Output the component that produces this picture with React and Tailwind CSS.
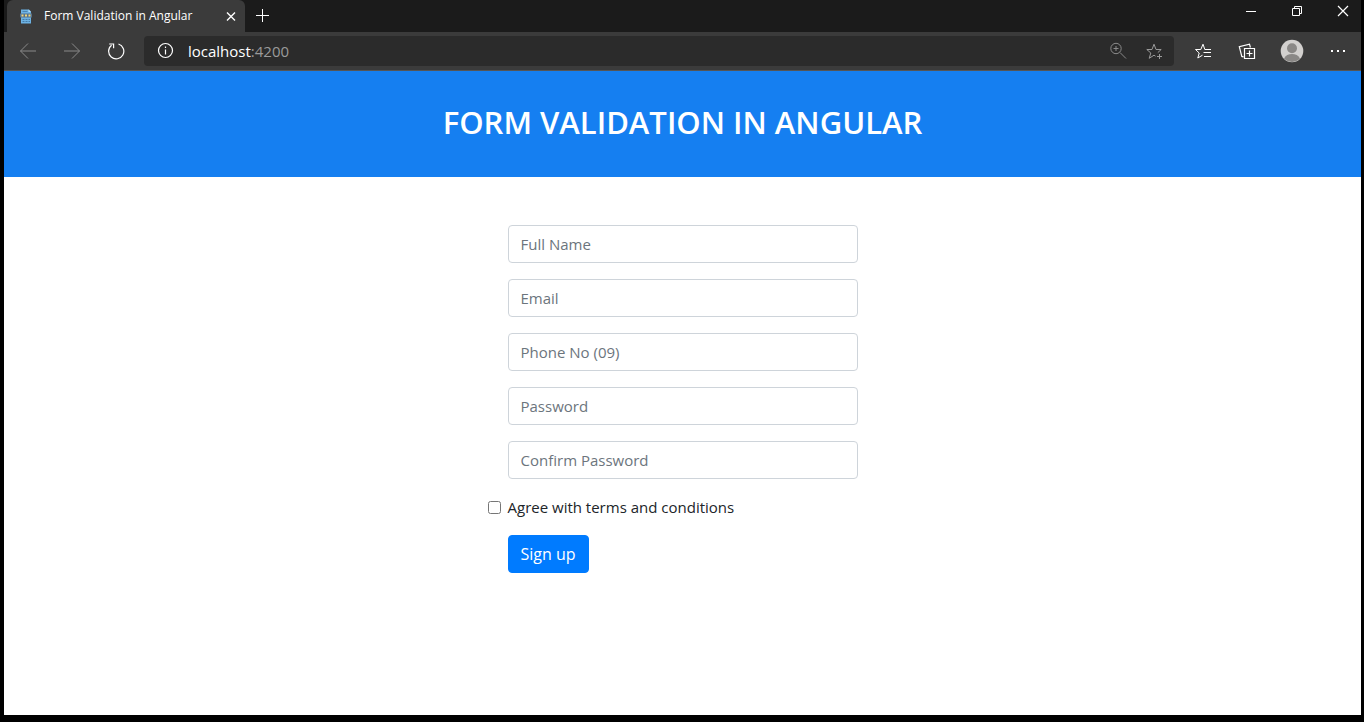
import { useState } from "react";

const fields = [
  { id: "fullName", label: "Full Name", type: "text" },
  { id: "email", label: "Email", type: "email" },
  { id: "phone", label: "Phone No (09)", type: "tel" },
  { id: "password", label: "Password", type: "password" },
  { id: "confirmPassword", label: "Confirm Password", type: "password" },
];

function Icon({ size = 18, className = "", children }) {
  return (
    <svg
      width={size}
      height={size}
      viewBox={`0 0 ${size} ${size}`}
      fill="none"
      stroke="currentColor"
      className={`shrink-0 ${className}`}
      aria-hidden="true"
    >
      {children}
    </svg>
  );
}

function ToolButton({ label, className = "", children }) {
  return (
    <button type="button" aria-label={label} className={`flex shrink-0 items-center justify-center ${className}`}>
      {children}
    </button>
  );
}

function TabStrip() {
  return (
    <div className="flex h-8 items-stretch bg-[#1b1b1b] pl-[3px] text-white">
      <div className="flex w-[238px] items-center rounded-t-md bg-[#3b3b3b] pr-[6px] pl-[13px]">
        <svg width="12" height="15" viewBox="0 0 12 15" className="shrink-0" aria-hidden="true">
          <path d="M1 0.5H9L11 2.5V14.5H1Z" fill="#6cb2e4" />
          <path d="M8.5 0.5L11 3H8.5Z" fill="#b9def5" />
          <path d="M2.5 2.5H7.5" stroke="#4b86b3" />
          <path d="M0 4.5H12V8.5H0Z" fill="#56738c" />
          <path d="M1.5 6.5H3.5M5 6.5H7M8.5 6.5H10.5" stroke="#f2d77c" strokeWidth="2" />
          <path d="M2.5 10.5H10M2.5 12.5H10" stroke="#467ba5" strokeDasharray="2 1" />
        </svg>
        <span className="ml-3 flex-1 text-xs whitespace-nowrap">Form Validation in Angular</span>
        <ToolButton label="Close tab" className="size-4">
          <Icon size={16}>
            <path d="M4 4.5L12 12.5M12 4.5L4 12.5" strokeWidth="1.4" />
          </Icon>
        </ToolButton>
      </div>
      <ToolButton label="New tab" className="w-[34px]">
        <Icon size={16}>
          <path d="M8.5 1V14M2 7.5H15" />
        </Icon>
      </ToolButton>
      <div className="ml-auto flex h-[22px] items-center">
        <ToolButton label="Minimize" className="w-[46px]">
          <Icon size={12}>
            <path d="M1 6.5H11" />
          </Icon>
        </ToolButton>
        <ToolButton label="Restore" className="w-[46px]">
          <Icon size={12}>
            <path d="M1.5 3.5H8.5V10.5H1.5ZM3.5 3.5V1.5H10.5V8.5H8.5" />
          </Icon>
        </ToolButton>
        <ToolButton label="Close window" className="w-[41px] pl-[5px]">
          <Icon size={12}>
            <path d="M1 1L11 11M11 1L1 11" strokeWidth="1.2" />
          </Icon>
        </ToolButton>
      </div>
    </div>
  );
}

function Toolbar() {
  return (
    <div className="flex h-[39px] items-center border-b border-[#555] bg-[#3b3b3b] pr-[14px] pl-[15px] text-white">
      <ToolButton label="Back" className="text-[#8a8a8a]">
        <Icon>
          <path d="M17 9H1.5M9 1.5L1.5 9L9 16.5" />
        </Icon>
      </ToolButton>
      <ToolButton label="Forward" className="ml-[26px] text-[#8a8a8a]">
        <Icon>
          <path d="M1 9H16.5M9 1.5L16.5 9L9 16.5" />
        </Icon>
      </ToolButton>
      <ToolButton label="Refresh" className="ml-[26px]">
        <Icon>
          <path d="M11.5 2A7.6 7.6 0 1 1 4.6 3.2M2.2 2H6.6V6.2" strokeWidth="1.2" />
        </Icon>
      </ToolButton>
      <div className="ml-[19px] flex h-[30px] min-w-0 flex-1 items-center rounded bg-[#2b2b2b] px-[10px]">
        <ToolButton label="Site information" className="w-6">
          <Icon>
            <circle cx="8.5" cy="8.5" r="7" strokeWidth="1.2" />
            <path d="M8.5 7.5V12.5M8.5 4.5V6" strokeWidth="1.2" />
          </Icon>
        </ToolButton>
        <span className="ml-[10px] flex-1 text-[15px]">
          localhost<span className="text-[#9a9a9a]">:4200</span>
        </span>
        <ToolButton label="Zoom" className="text-[#8a8a8a]">
          <Icon>
            <circle cx="6" cy="6.5" r="5.2" />
            <path d="M10 10.5L16 16.5M6 4V9M3.5 6.5H8.5" />
          </Icon>
        </ToolButton>
        <ToolButton label="Add to favorites" className="ml-[18px] text-[#9a9a9a]">
          <Icon>
            <path d="M9.5 14.2L8 13.2L3.2 16.3L4.8 11L0.8 7.5H6L8 2.2L10 7.5H15.2L11.8 10.6M11 14.5H16M13.5 12V17" />
          </Icon>
        </ToolButton>
      </div>
      <ToolButton label="Favorites" className="ml-5">
        <Icon>
          <path d="M8.5 13.2L3.8 16L5.2 11L1.5 7.5H6.8L9 2.2L10.8 7.5H17M9.5 10.5H17M10 14.5H17" />
        </Icon>
      </ToolButton>
      <ToolButton label="Collections" className="ml-[26px]">
        <Icon>
          <path d="M6.5 6.5H16.5V16.5H6.5ZM11.5 8.5V14.5M8.5 11.5H14.5M5.5 14.8L3.8 14.4L1.3 4.6L11.5 2.2L12.4 5.5" strokeWidth="1.2" />
        </Icon>
      </ToolButton>
      <ToolButton label="Profile" className="ml-6">
        <svg width="24" height="24" viewBox="0 0 24 24" aria-hidden="true">
          <circle cx="12" cy="12" r="11.3" fill="#d2d0ce" />
          <circle cx="12" cy="9.3" r="5" fill="#8a8886" />
          <path d="M4 19.6C5.5 16.2 8.5 15 12 15S18.5 16.2 20 19.6A11.3 11.3 0 0 1 4 19.6Z" fill="#8a8886" />
        </svg>
      </ToolButton>
      <ToolButton label="Settings and more" className="ml-[25px]">
        <Icon>
          <path d="M2 9H4M8 9H10M14 9H16" strokeWidth="2" />
        </Icon>
      </ToolButton>
    </div>
  );
}

export default function App() {
  const [agreed, setAgreed] = useState(false);
  return (
    <div className="flex min-h-screen flex-col border-r-[3px] border-b-[7px] border-l-4 border-black bg-white font-['Open_Sans','Noto_Sans',sans-serif] text-[#212529]">
      <header>
        <TabStrip />
        <Toolbar />
      </header>
      <main>
        <div className="bg-[#157ff1] pt-8 pb-9 text-center text-white">
          <h1 className="text-[31px] leading-[38px] font-semibold">FORM VALIDATION IN ANGULAR</h1>
        </div>
        <form className="mx-auto mt-12 w-[350px] max-w-full" onSubmit={(e) => e.preventDefault()}>
          <div className="flex flex-col gap-4">
            {fields.map((field) => (
              <input
                key={field.id}
                id={field.id}
                type={field.type}
                aria-label={field.label}
                placeholder={field.label}
                className="h-[38px] w-full rounded border border-[#ced4da] px-3 text-[15px] placeholder:text-[#6c757d]"
              />
            ))}
          </div>
          <label className="mt-4 -ml-5 flex items-center gap-[7px] text-[15px] leading-6">
            <input
              type="checkbox"
              checked={agreed}
              onChange={(e) => setAgreed(e.target.checked)}
              className="size-[13px]"
            />
            Agree with terms and conditions
          </label>
          <button
            type="submit"
            className="mt-4 h-[38px] rounded border border-[#007bff] bg-[#007bff] px-3 text-base text-white"
          >
            Sign up
          </button>
        </form>
      </main>
    </div>
  );
}
